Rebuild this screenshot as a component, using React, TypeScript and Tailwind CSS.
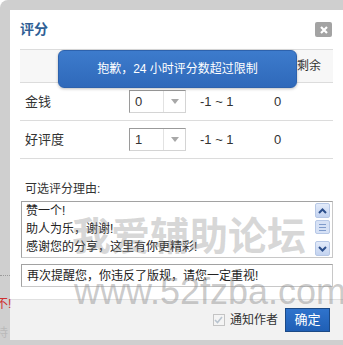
import React from "react";

const font = { fontFamily: '"Liberation Sans", "Noto Sans CJK SC", sans-serif' };

// ─── Select box ──────────────────────────────────────────────────────────────
function ScoreSelect({ value }: { value: string }) {
  return (
    <div className="flex h-[23px] w-[57px] border border-t-[#9a9a9a] border-l-[#9a9a9a] border-r-[#d4d4d4] border-b-[#d4d4d4] bg-white">
      <div className="flex w-[33px] items-center pl-[5px] text-[13px] text-[#333]">{value}</div>
      <div className="flex flex-1 items-center justify-center border-l border-[#e2e2e2]">
        <svg width="8" height="5" viewBox="0 0 8 5">
          <path d="M0 0 L8 0 L4 5 Z" fill="#a8a8a8" />
        </svg>
      </div>
    </div>
  );
}

// ─── Scroll button ───────────────────────────────────────────────────────────
function ScrollBtn({ dir }: { dir: "up" | "down" }) {
  return (
    <div className="flex h-[15px] w-[15px] items-center justify-center rounded-[2px] border border-[#b7c8e6] bg-gradient-to-b from-[#e3ebfa] to-[#c3d3f0]">
      <svg width="9" height="6" viewBox="0 0 9 6">
        <path
          d={dir === "up" ? "M1 5 L4.5 1.5 L8 5" : "M1 1 L4.5 4.5 L8 1"}
          stroke="#2c4f8c"
          strokeWidth="2"
          fill="none"
        />
      </svg>
    </div>
  );
}

export default function App() {
  const rows = [
    { label: "金钱", value: "0" },
    { label: "好评度", value: "1" },
  ];

  return (
    <div className="relative h-[345px] w-[343px] overflow-hidden bg-white" style={font}>
      {/* ── FRAME ── */}
      <div className="flex h-full flex-col rounded-tl-[8px] bg-[#cfcfcf] pb-[5px] pl-[10px] pt-[10px]">
        <div className="flex flex-1 flex-col bg-white">
          {/* Header */}
          <div className="flex h-[39px] items-center justify-between pl-[10px] pr-[11px]">
            <span className="text-[14px] font-bold text-[#2f5f96]">评分</span>
            <div className="flex h-[15px] w-[17px] items-center justify-center rounded-[2px] bg-[#a3a3a3]">
              <svg width="8" height="8" viewBox="0 0 8 8">
                <path d="M1 1 L7 7 M7 1 L1 7" stroke="#fff" strokeWidth="2.2" />
              </svg>
            </div>
          </div>

          {/* Table */}
          <div className="ml-[10px] mr-[10px] border-t border-[#dcdcdc] text-[12px] text-[#333]">
            <div className="grid h-[33px] grid-cols-[109px_71px_70px_1fr] items-center border-b border-[#dcdcdc] bg-[#f7f7f7]">
              <span />
              <span />
              <span />
              <span className="pl-[27px]">剩余</span>
            </div>
            {rows.map((r) => (
              <div
                key={r.label}
                className="grid h-[38px] grid-cols-[109px_71px_70px_1fr] items-center border-b border-[#dcdcdc]"
              >
                <span className="pl-[5px] text-[13px]">{r.label}</span>
                <ScoreSelect value={r.value} />
                <span className="text-[13px]">-1 ~ 1</span>
                <span className="pl-[4px] text-[13px]">0</span>
              </div>
            ))}
          </div>

          {/* Reasons */}
          <div className="mt-[22px] pl-[15px] text-[12px] leading-[16px] text-[#333]">可选评分理由:</div>
          <div className="ml-[11px] mr-[10px] mt-[4px] flex h-[57px] border border-[#a2a2a2] border-r-[#c8c8c8] border-b-[#c8c8c8]">
            <div className="flex-1 pl-[4px] text-[12px] leading-[18px] text-[#222]">
              <div>赞一个!</div>
              <div>助人为乐，谢谢!</div>
              <div>感谢您的分享，这里有你更精彩!</div>
            </div>
            <div className="mr-[2px] flex w-[15px] flex-col py-[1px]">
              <ScrollBtn dir="up" />
              <div className="mt-[2px] flex h-[14px] w-[15px] flex-col items-center justify-center gap-[2px] rounded-[2px] border border-[#b7c8e6] bg-[#d6e1f5]">
                <div className="h-px w-[7px] bg-[#7f9bcb]" />
                <div className="h-px w-[7px] bg-[#7f9bcb]" />
                <div className="h-px w-[7px] bg-[#7f9bcb]" />
              </div>
              <div className="flex-1" />
              <ScrollBtn dir="down" />
            </div>
          </div>
          <div className="ml-[11px] mr-[10px] mt-[6px] flex h-[23px] items-center border border-[#a2a2a2] border-r-[#c8c8c8] border-b-[#c8c8c8] pl-[5px] text-[12px] text-[#222]">
            再次提醒您，你违反了版规，请您一定重视!
          </div>

          <div className="flex-1" />

          {/* Footer */}
          <div className="flex h-[41px] items-center justify-end border-t border-[#e0e0e0] bg-[#f2f2f2] pr-[13px]">
            <div className="flex h-[12px] w-[12px] items-center justify-center border border-[#c4c4c4] bg-[#f4f4f4]">
              <svg width="9" height="8" viewBox="0 0 9 8">
                <path d="M1 4 L3.5 6.5 L8 1" stroke="#b9c4cf" strokeWidth="1.6" fill="none" />
              </svg>
            </div>
            <span className="ml-[5px] text-[12px] text-[#333]">通知作者</span>
            <button className="ml-[7px] flex h-[24px] w-[45px] items-center justify-center border border-[#1c4a86] bg-gradient-to-b from-[#2f73cc] to-[#1f5fb5] text-[13px] text-white">
              确定
            </button>
          </div>
        </div>
      </div>

      {/* ── PAGE BEHIND (left strip) ── */}
      <div className="absolute left-0 top-[275px] w-[10px] border-t border-dotted border-[#9a9a9a]" />
      <div className="absolute left-[-4px] top-[297px] text-[12px] leading-[14px] text-[#d03030]">不!</div>
      <div className="absolute left-[-4px] top-[326px] text-[12px] leading-[14px] text-[#b9b9b9]">持</div>

      {/* ── TOAST ── */}
      <div className="absolute left-[58px] top-[50px] flex h-[38px] w-[239px] items-center justify-center rounded-[6px] border border-[#2d62ad] bg-gradient-to-b from-[#3d7bcc] to-[#2f69ba] text-[12px] text-white shadow-[0_1px_3px_rgba(0,0,0,0.25)]">
        抱歉，24 小时评分数超过限制
      </div>

      {/* ── WATERMARK ── */}
      <div className="pointer-events-none absolute left-[72px] top-[211px] whitespace-nowrap text-[39px] font-bold leading-[52px] text-[#8c8c8c]/35">
        我爱辅助论坛
      </div>
      <div className="pointer-events-none absolute left-[74px] top-[270px] whitespace-nowrap text-[36px] leading-[44px] text-[#8c8c8c]/45">
        www.52fzba.com
      </div>
    </div>
  );
}
